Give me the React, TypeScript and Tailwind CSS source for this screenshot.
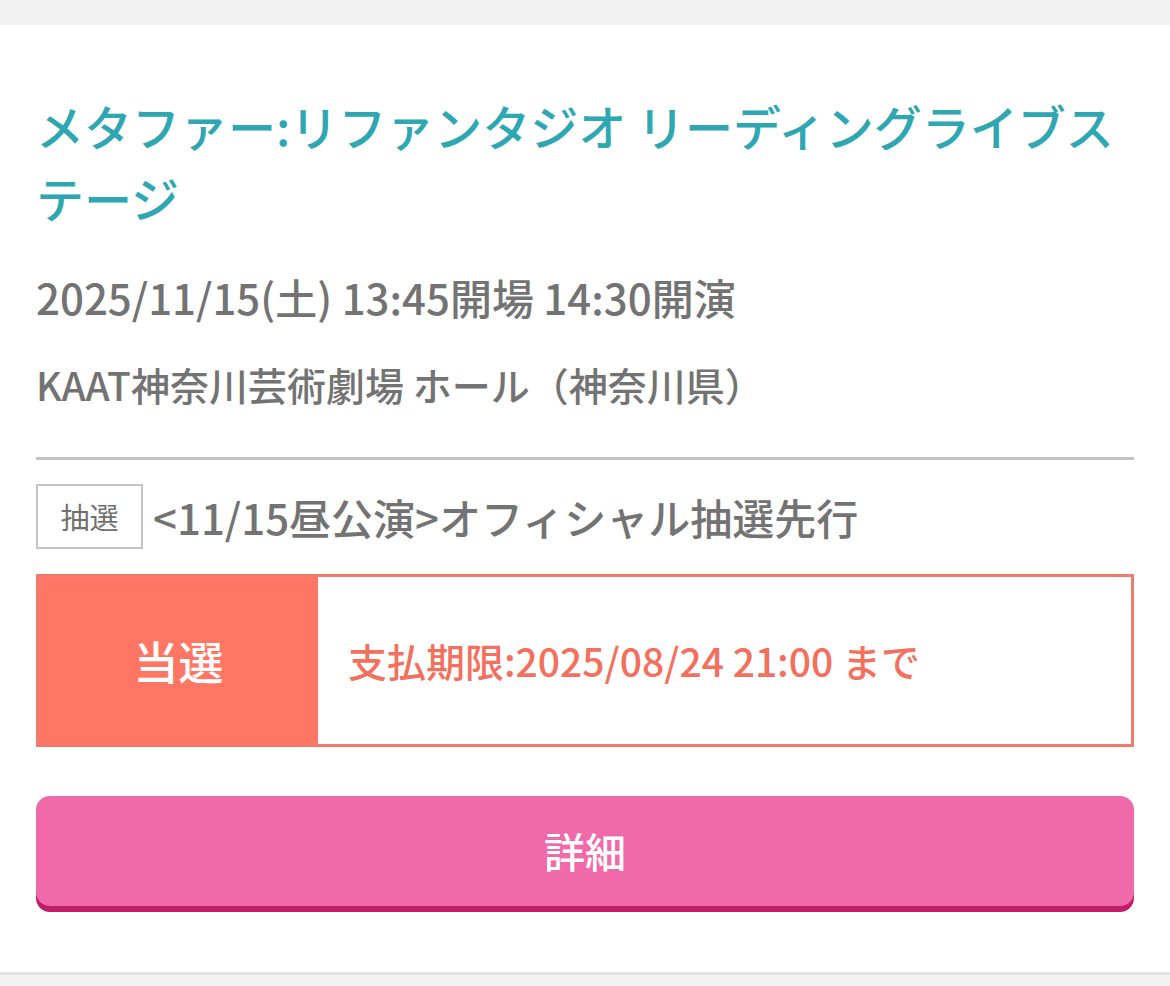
import React from "react";

export default function App() {
  return (
    <div
      className="min-h-[986px] w-full bg-[#f2f2f2] pt-[25px]"
      style={{ fontFamily: '"Noto Sans CJK JP", "Noto Sans", sans-serif' }}
    >
      <div className="bg-white px-[36px] pt-[64px] pb-[66px] border-b-[3px] border-[#e3e3e3]">
        <h1 className="text-[48px] leading-[72px] text-[#2fa7b2] font-medium">
          メタファー:リファンタジオ リーディングライブステージ
        </h1>
        <p className="mt-[37px] text-[42px] leading-[54px] text-[#737373] font-medium">
          2025/11/15(土) 13:45開場 14:30開演
        </p>
        <p className="mt-[33px] text-[39px] leading-[54px] text-[#737373] font-medium">
          KAAT神奈川芸術劇場 ホール（神奈川県）
        </p>
        <div className="mt-[46px] h-[3px] bg-[#c2c2c2]" />
        <div className="mt-[24px] flex items-center">
          <span className="flex h-[65px] w-[107px] items-center justify-center border-[2px] border-[#c4c4c4] text-[29px] text-[#707070]">
            抽選
          </span>
          <span className="ml-[10px] text-[42px] leading-[54px] text-[#737373] font-medium">
            &lt;11/15昼公演&gt;オフィシャル抽選先行
          </span>
        </div>
        <div className="mt-[25px] flex h-[173px] border-[3px] border-[#f07b6c]">
          <div className="flex w-[279px] items-center justify-center bg-[#ff7764] text-[45px] text-white font-medium">
            当選
          </div>
          <div className="flex flex-1 items-center pl-[30px] text-[39px] text-[#f2705d] font-medium">
            支払期限:2025/08/24 21:00 まで
          </div>
        </div>
        <button className="mt-[49px] flex h-[110px] w-full items-center justify-center rounded-[14px] bg-[#f06aa9] text-[41px] text-white font-medium shadow-[0_6px_0_#c21d6a]">
          詳細
        </button>
      </div>
    </div>
  );
}
